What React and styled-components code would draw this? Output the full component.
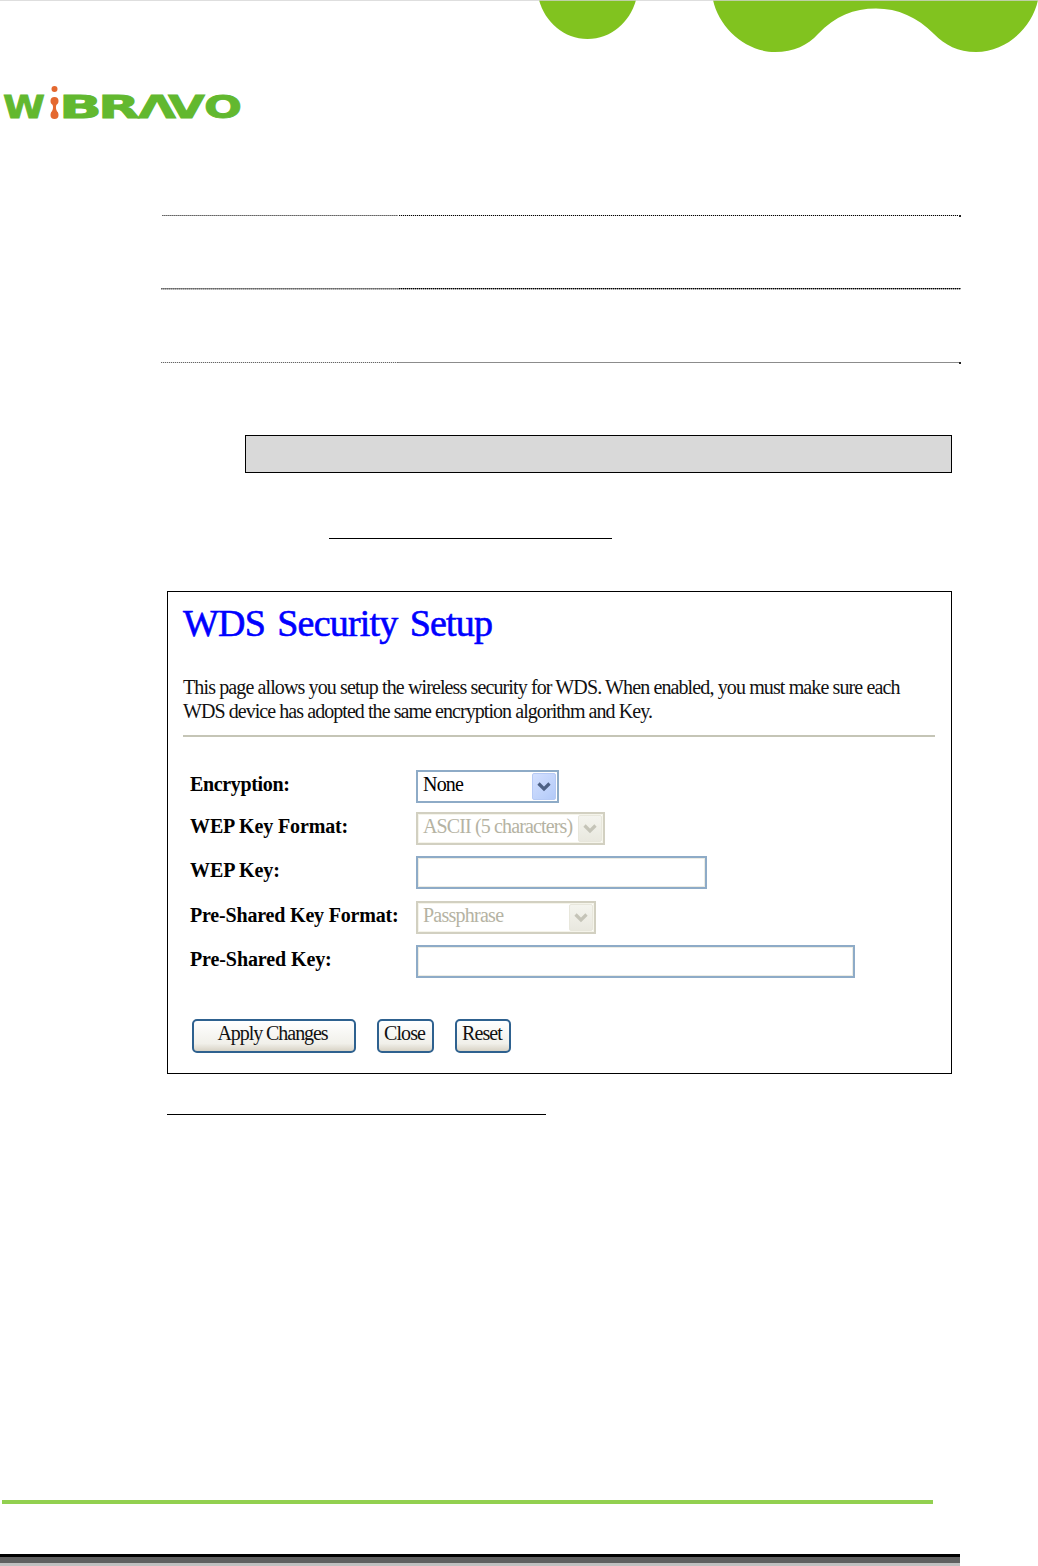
import React from 'react';
import styled, { createGlobalStyle, css } from 'styled-components';

const GlobalStyle = createGlobalStyle`
    * {
        box-sizing: border-box;
    }
    body {
        margin: 0;
        background: #fff;
        color: #000;
        font-family: 'Liberation Serif', 'Times New Roman', serif;
    }
`;

const Page = styled.div`
    display: flex;
    flex-direction: column;
    width: 1038px;
    height: 1566px;
    overflow: hidden;
`;

const Header = styled.header`
    height: 215px;

    svg {
        display: block;
    }
    .logo {
        margin-top: 20px;
    }
`;

const Rules = styled.div`
    display: flex;
    flex-direction: column;
    width: 800px;
    height: 220px;
    margin-left: 161px;
`;

const Rule = styled.div`
    display: flex;
    justify-content: space-between;
    align-items: flex-start;
    height: ${p => p.$height}px;
    padding-left: ${p => p.$indent || 0}px;
`;

const dots = (a, b) => `repeating-linear-gradient(90deg, ${a} 0 1px, ${b} 1px 2px)`;

const Dotted = styled.div`
    width: ${p => p.$width}px;

    &::before,
    &::after {
        content: '';
        display: block;
        height: 1px;
        background: ${p => p.$line};
    }
    &::after {
        background: ${p => p.$under || 'none'};
    }
`;

const EndDot = styled.div`
    width: 2px;
    height: 2px;
    background: #222;
`;

const NoteBar = styled.div`
    width: 707px;
    height: 38px;
    margin-left: 245px;
    background: #d9d9d9;
    border: 1px solid #000;
`;

const Underline = styled.div`
    width: ${p => p.$width}px;
    height: 1px;
    margin: ${p => p.$margin};
    background: #000;
`;

const Panel = styled.main`
    width: 785px;
    height: 483px;
    margin-left: 167px;
    padding: 0 16px 0 15px;
    border: 1px solid #000;
`;

const Title = styled.h1`
    margin: 8px 0 0;
    font-size: 38px;
    font-weight: 400;
    line-height: 46px;
    letter-spacing: -0.8px;
    word-spacing: 3.5px;
    white-space: nowrap;
    color: #00f;
    -webkit-text-stroke: 0.6px #00f;
`;

const Intro = styled.div`
    margin-top: 29px;
    color: #111;
`;

const IntroLine = styled.p`
    margin: 0;
    font-size: 20px;
    line-height: 24px;
    white-space: nowrap;
    letter-spacing: ${p => p.$spacing}px;
`;

const Divider = styled.div`
    height: 2px;
    margin-top: 12px;
    background: #c5c5b6;
`;

const Form = styled.form`
    display: grid;
    grid-template-columns: 226px 1fr;
    grid-template-rows: 42px 44px 45px 44px 33px;
    margin: 33px 0 0 7px;
`;

const Label = styled.label`
    font-size: 20px;
    font-weight: 700;
    line-height: 29px;
    white-space: nowrap;
    letter-spacing: ${p => p.$spacing}px;
`;

const field = css`
    width: ${p => p.$width}px;
    height: 33px;
    border: 2px solid #8eabc7;
    background: #fff;
`;

const TextField = styled.input`
    ${field}
    padding: 0 4px;
    outline: none;
    box-shadow: inset 0 0 0 1px #ecece4;
`;

const SelectBox = styled.div`
    ${field}
    display: flex;
    justify-content: space-between;
    padding: 1px 1px 1px 5px;
    font-size: 20px;
    line-height: 23px;
    white-space: nowrap;
    letter-spacing: ${p => p.$spacing}px;

    ${p => p.$disabled && css`
        color: #b5b3a3;
        border-color: #d2d0c1;
        box-shadow: inset 0 0 0 1px #f5f4ea;
    `}
`;

const Arrow = styled.span`
    display: flex;
    align-items: center;
    justify-content: center;
    width: 24px;
    height: 27px;
    border-radius: 2px;
    color: #4d6185;
    border: 1px solid #b6caf5;
    background: linear-gradient(135deg, #d3e0ff, #b3caf8);

    ${p => p.$disabled && css`
        color: #c5c4b8;
        border-color: #e8e7dc;
        background: linear-gradient(#f4f4ee, #e9e8df);
    `}
`;

const Buttons = styled.div`
    display: flex;
    gap: 21px;
    margin: 41px 0 0 9px;
`;

const Button = styled.button`
    width: ${p => p.$width}px;
    height: 34px;
    padding: 0 ${p => p.$shift || 0}px 6px 0;
    font-family: inherit;
    font-size: 20px;
    line-height: 24px;
    letter-spacing: ${p => p.$spacing}px;
    white-space: nowrap;
    color: #111;
    border: 2px solid #2e618f;
    border-radius: 5px;
    background: linear-gradient(#fff, #f1f0ea 75%, #d8d3c6);
`;

const Footer = styled.footer`
    margin-top: auto;

    .green {
        width: 931px;
        height: 4px;
        margin: 0 0 50px 2px;
        background: #92d050;
    }
    .bars {
        width: 960px;
        height: 12px;
        background: linear-gradient(#000 0 3px, #606060 3px 9px, #c0c0c0 9px);
    }
`;

const Waves = () => (
    <svg width="1038" height="56" viewBox="0 0 1038 56">
        <g fill="#81c31f">
            <path d="M539 0C545 22 564 39 587.500 39S630 22 636 0Z" />
            <path d="M713 0C719 28 746 52 775 52C794 52 808 45 818 34C835 16 854 8.500 876 8.500C898 8.500 917 17 934 34C945 45 958 52 976 52C1006 52 1032 28 1038 0Z" />
        </g>
        <rect width="1038" height="1" fill="#d3d3d3" fillOpacity="0.75" />
    </svg>
);

const letters = [
    ['W', 3, 42],
    ['B', 59, 43],
    ['R', 98, 42],
    ['Λ', 138, 38],
    ['V', 168, 37],
    ['O', 204, 38]
];

const Logo = () => (
    <svg className="logo" width="260" height="50" viewBox="0 76 260 50" role="img" aria-label="WiBRAVO">
        <g
            fill="#62b82f"
            stroke="#62b82f"
            strokeWidth="0.8"
            fontFamily="'DejaVu Sans', sans-serif"
            fontSize="31.500"
            fontWeight="700"
        >
            {letters.map(([char, x, width]) => (
                <text key={char} x={x} y="118" textLength={width} lengthAdjust="spacingAndGlyphs">{char}</text>
            ))}
        </g>
        <g fill="#e4682f">
            <circle cx="54.500" cy="89" r="3" />
            <circle cx="54.500" cy="101" r="4" />
            <circle cx="54.500" cy="115" r="4" />
            <path d="M52 103H57C55.500 107 55.500 109 58 113H51C53.500 109 53.500 107 52 103Z" />
        </g>
    </svg>
);

const Select = ({ value, width, spacing, disabled }) => (
    <SelectBox $width={width} $spacing={spacing} $disabled={disabled}>
        {value}
        <Arrow $disabled={disabled}>
            <svg width="14" height="10" viewBox="0 0 14 10">
                <path d="M1.500 1.500L7 7L12.500 1.500" fill="none" stroke="currentColor" strokeWidth="3.200" />
            </svg>
        </Arrow>
    </SelectBox>
);

const App = () => (
    <Page>
        <GlobalStyle />
        <Header>
            <Waves />
            <Logo />
        </Header>
        <Rules>
            <Rule $height={73} $indent={1}>
                <Dotted $width={236} $line={dots('#666', '#999')} />
                <Dotted $width={559} $line={dots('#000', '#ccc')} />
                <EndDot />
            </Rule>
            <Rule $height={74}>
                <Dotted $width={238} $line={dots('#666', '#888')} $under={dots('#aaa', '#ccc')} />
                <Dotted $width={562} $line={dots('#000', '#777')} $under={dots('#999', '#ddd')} />
            </Rule>
            <Rule $height={10}>
                <Dotted $width={237} $line={dots('#666', '#ddd')} />
                <Dotted $width={561} $line="#8c8c8c" />
                <EndDot />
            </Rule>
        </Rules>
        <NoteBar />
        <Underline $width={283} $margin="65px 0 52px 329px" />
        <Panel>
            <Title>WDS Security Setup</Title>
            <Intro>
                <IntroLine $spacing={-0.88}>
                    This page allows you setup the wireless security for WDS. When enabled, you must make sure each
                </IntroLine>
                <IntroLine $spacing={-0.94}>
                    WDS device has adopted the same encryption algorithm and Key.
                </IntroLine>
            </Intro>
            <Divider />
            <Form onSubmit={e => e.preventDefault()}>
                <Label $spacing={-0.35}>Encryption:</Label>
                <Select value="None" width={143} spacing={-0.8} />
                <Label $spacing={-0.12}>WEP Key Format:</Label>
                <Select value="ASCII (5 characters)" width={189} spacing={-0.87} disabled />
                <Label htmlFor="wep" $spacing={-0.1}>WEP Key:</Label>
                <TextField id="wep" $width={291} />
                <Label $spacing={-0.18}>Pre-Shared Key Format:</Label>
                <Select value="Passphrase" width={180} spacing={-0.75} disabled />
                <Label htmlFor="psk" $spacing={-0.1}>Pre-Shared Key:</Label>
                <TextField id="psk" $width={439} />
            </Form>
            <Buttons>
                <Button $width={164} $shift={3} $spacing={-1.05}>Apply Changes</Button>
                <Button $width={57} $shift={2} $spacing={-0.9}>Close</Button>
                <Button $width={56} $shift={2} $spacing={-0.9}>Reset</Button>
            </Buttons>
        </Panel>
        <Underline $width={379} $margin="40px 0 0 167px" />
        <Footer>
            <div className="green" />
            <div className="bars" />
        </Footer>
    </Page>
);

export default App;
